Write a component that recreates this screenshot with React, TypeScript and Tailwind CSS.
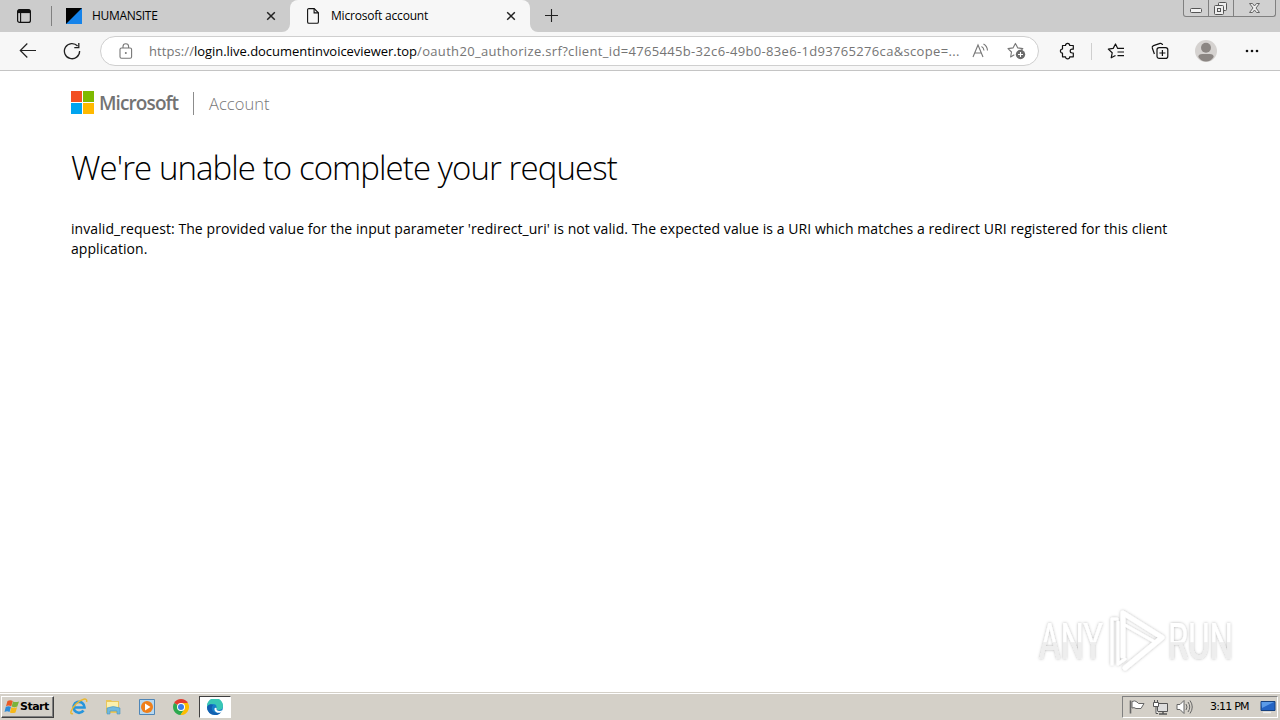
import React from "react";

const ui = "font-['Open_Sans','Noto_Sans',sans-serif]";

function CloseIcon() {
  return (
    <svg width="10" height="10" viewBox="0 0 10 10" className="ml-px shrink-0" stroke="#222" strokeWidth="1.5">
      <path d="M1.2 1.2l7.6 7.6M8.8 1.2l-7.6 7.6" />
    </svg>
  );
}

function TabStrip() {
  return (
    <div className="flex h-8 shrink-0 items-start bg-[#cccccc]">
      <div className="flex h-8 w-[290px] shrink-0 items-center pl-[17px]">
        <svg width="14" height="14" viewBox="0 0 14 14" className="shrink-0" fill="none" stroke="#111">
          <rect x="0.6" y="0.6" width="12.8" height="12.8" rx="2" strokeWidth="1.2" />
          <path d="M1 2.4h12" strokeWidth="3.4" />
          <path d="M3.6 3v10" strokeWidth="1.1" />
        </svg>
        <div className="ml-5 h-5 w-px bg-[#808080]" />
        <svg width="16" height="16" viewBox="0 0 16 16" className="ml-[14px] shrink-0">
          <path d="M0 0h16v16H0z" fill="#1583ea" />
          <path d="M0 0h16L0 16z" fill="#000" />
        </svg>
        <span className="ml-[10px] w-[173px] text-[12px] leading-4 tracking-[-0.3px] whitespace-nowrap text-black">HUMANSITE</span>
        <CloseIcon />
      </div>
      <div className="relative flex h-8 w-[240px] shrink-0 items-center rounded-t-lg bg-[#f7f7f7] pl-[17px]">
        <svg width="8" height="8" viewBox="0 0 8 8" className="absolute bottom-0 -left-2">
          <path d="M8 0v8H0a8 8 0 0 0 8-8z" fill="#f7f7f7" />
        </svg>
        <svg width="8" height="8" viewBox="0 0 8 8" className="absolute -right-2 bottom-0">
          <path d="M0 0v8h8a8 8 0 0 1-8-8z" fill="#f7f7f7" />
        </svg>
        <svg width="12" height="16" viewBox="0 0 12 16" className="shrink-0" fill="none" stroke="#111" strokeWidth="1.1">
          <path d="M2 .6h5.2l4.2 4.2V14a1.3 1.3 0 0 1-1.3 1.3H1.9A1.3 1.3 0 0 1 .6 14V1.9A1.3 1.3 0 0 1 2 .6z" />
          <path d="M7.1.8v4.1h4.2" />
        </svg>
        <span className="ml-3 w-[174px] text-[12px] leading-4 tracking-[-0.2px] whitespace-nowrap text-black">Microsoft account</span>
        <CloseIcon />
      </div>
      <svg width="14" height="14" viewBox="0 0 14 14" className="mt-[9px] ml-[15px] shrink-0" stroke="#222" strokeWidth="1.1">
        <path d="M6.5 0v13M0 6.5h13" />
      </svg>
      <div className="mr-1 ml-auto flex h-[17px] w-[93px] rounded-b-[3px] border border-t-0 border-[#808080] bg-[#d0d0d0]">
        <div className="flex w-[25px] justify-center border-r border-[#808080]">
          <svg width="24" height="16" viewBox="0 0 24 16" fill="#f2f2f2" stroke="#555">
            <rect x="6.5" y="8.5" width="11" height="4" rx="1" />
          </svg>
        </div>
        <div className="flex w-[25px] justify-center border-r border-[#808080]">
          <svg width="24" height="16" viewBox="0 0 24 16" fill="#eeeeee" stroke="#555">
            <rect x="9.5" y="2.5" width="8" height="8" rx="1" />
            <rect x="5.5" y="5.5" width="9" height="9" rx="1" />
            <rect x="8.5" y="8.5" width="3" height="3" />
          </svg>
        </div>
        <div className="flex flex-1 justify-center">
          <svg width="40" height="16" viewBox="0 0 40 16">
            <path d="M14.5 3.500h3l2 2.500 2-2.500h3L21 8l3.500 4.500h-3l-2-2.500-2 2.500h-3L18 8z" fill="#eee" stroke="#666" />
          </svg>
        </div>
      </div>
    </div>
  );
}

function Toolbar() {
  return (
    <div className="flex h-[39px] shrink-0 items-center border-b border-[#c4c4c4] bg-[#f7f7f7]">
      <svg width="18" height="16" viewBox="0 0 18 16" className="ml-[19px] shrink-0" fill="none" stroke="#222" strokeWidth="1.2">
        <path d="M17 7.500H1.500M8.300.500L1.300 7.500l7 7" />
      </svg>
      <svg width="18" height="18" viewBox="0 0 18 18" className="ml-[26px] shrink-0" fill="none" stroke="#222" strokeWidth="1.3">
        <path d="M14.6 4A7.6 7.6 0 1 0 16.6 9" />
        <path d="M15.8 1v4.6h-4.5" />
      </svg>
      <div className="ml-[19px] flex h-[30px] w-[939px] shrink-0 items-center rounded-full border border-[#cfcfcf] bg-white">
        <svg width="14" height="16" viewBox="0 0 14 16" className="ml-[18px] shrink-0" fill="none" stroke="#777" strokeWidth="1.1">
          <rect x="1" y="5" width="11.6" height="10.2" rx="1.5" />
          <path d="M4 5V3.500a2.800 2.800 0 0 1 5.600 0V5" />
          <circle cx="6.8" cy="10" r="1" fill="#777" stroke="none" />
        </svg>
        <div className="ml-4 flex w-[823px] text-[13px] leading-5 whitespace-pre text-[#757575]">
          <span className="tracking-[0.08px]">https://</span>
          <span className="tracking-[-0.04px] text-black">login.live.documentinvoiceviewer.top</span>
          <span className="tracking-[0.33px]">/oauth20_authorize.srf?client_id=4765445b-32c6-49b0-83e6-1d93765276ca&amp;scope=...</span>
        </div>
        <svg width="17" height="16" viewBox="0 0 17 16" className="shrink-0" fill="none" stroke="#777" strokeWidth="1.1">
          <path d="M1 14L6 2l5 12M2.700 10h6.600" />
          <path d="M9.500 3.500q2.200 1 2.500 4M11.500 1q3.700 2 4 6.500" />
        </svg>
        <svg width="19" height="18" viewBox="0 0 19 18" className="ml-[18px] shrink-0">
          <path d="M7.300 12.800L3.600 15l.9-5L1 6.600l5-.7 2.400-4.500 2.400 4.500 5 .7-2 2" fill="none" stroke="#777" strokeWidth="1.100" strokeLinejoin="round" />
          <circle cx="13.500" cy="12.500" r="4.700" fill="#6b6b6b" />
          <path d="M13.500 10v5M11 12.500h5" stroke="#fff" strokeWidth="1.100" />
        </svg>
      </div>
      <svg width="16" height="18" viewBox="0 0 16 18" className="ml-5 shrink-0" fill="none" stroke="#111" strokeWidth="1.2" strokeLinejoin="round">
        <path d="M3.500 3.500H6.500a2.100 2.100 0 0 1 4.200 0h3.600v3.700h-1.200a1.900 1.900 0 0 0 0 3.800h1.200v3.800H10.700a2.100 2.100 0 0 1-4.200 0H3.500v-3.600a2.100 2.100 0 0 1 0-4.200z" />
      </svg>
      <div className="ml-4 h-[17px] w-px bg-[#cfcfcf]" />
      <svg width="18" height="16" viewBox="0 0 18 16" className="ml-[15px] shrink-0" fill="none" stroke="#111" strokeWidth="1.2" strokeLinejoin="round">
        <path d="M8.500 12.500l-4.300 2.300 1-5L1.300 6.100l4.900-.7L8.500 1l2.200 4.400h6.300M10.500 9h6.500M10.500 12.700h6.500" />
      </svg>
      <svg width="18" height="18" viewBox="0 0 18 18" className="ml-[26px] shrink-0" fill="none" stroke="#111" strokeWidth="1.2">
        <rect x="6" y="5.6" width="10.8" height="10.8" rx="2.2" />
        <path d="M11.400 8v6M8.400 11h6M3.400 12L1.300 6a2 2 0 0 1 1.200-2.400l6.600-2.200A2 2 0 0 1 11.600 3" />
      </svg>
      <svg width="22" height="22" viewBox="0 0 22 22" className="ml-[26px] shrink-0">
        <circle cx="11" cy="11" r="11" fill="#d5d2d0" />
        <circle cx="11" cy="7.8" r="5" fill="#8b8683" />
        <path d="M3.300 17q0-3 4-3h7.400q4 0 4 3-3 4.600-7.700 4.600T3.300 17z" fill="#8b8683" />
      </svg>
      <svg width="14" height="4" viewBox="0 0 14 4" className="ml-7 shrink-0" fill="#111">
        <circle cx="2" cy="2" r="1.3" />
        <circle cx="7" cy="2" r="1.3" />
        <circle cx="12" cy="2" r="1.3" />
      </svg>
    </div>
  );
}

function Watermark() {
  return (
    <svg width="216" height="74" viewBox="0 0 216 74" className="absolute right-9 bottom-3 overflow-visible">
      <defs>
        <filter id="halo" x="-10%" y="-20%" width="120%" height="140%">
          <feDropShadow dx="0" dy="0" stdDeviation="1.8" floodColor="#000" floodOpacity="0.3" />
        </filter>
        <linearGradient id="shade" x1="0" y1="0" x2="0" y2="1">
          <stop offset="0.5" stopColor="#fff" />
          <stop offset="0.51" stopColor="#eeeeee" />
        </linearGradient>
      </defs>
      <g filter="url(#halo)">
        <text x="11" y="53" textLength="64" lengthAdjust="spacingAndGlyphs" fill="url(#shade)" className="font-['Roboto',sans-serif] text-[50px]">ANY</text>
        <text x="140" y="53" textLength="65" lengthAdjust="spacingAndGlyphs" fill="url(#shade)" className="font-['Roboto',sans-serif] text-[50px]">RUN</text>
        <g fill="none" stroke="#fff" strokeWidth="5" strokeLinejoin="round" strokeLinecap="round">
          <path d="M95 50V7l39 24.500L97 62" />
          <path d="M84 58V13h5M90 16v42l7-5M97 19l30 17" strokeWidth="3" />
        </g>
      </g>
    </svg>
  );
}

function Page() {
  return (
    <div className="relative flex h-[621px] shrink-0 flex-col bg-white px-[71px]">
      <div className="mt-5 flex h-6 items-start">
        <svg width="23" height="23" viewBox="0 0 23 23" className="shrink-0">
          <path d="M0 0h11v11H0z" fill="#f25022" />
          <path d="M12 0h11v11H12z" fill="#7fba00" />
          <path d="M0 12h11v11H0z" fill="#00a4ef" />
          <path d="M12 12h11v11H12z" fill="#ffb900" />
        </svg>
        <span className="ml-[5px] w-[94px] text-[19px] leading-6 font-semibold tracking-[-0.9px] text-[#737373]">Microsoft</span>
        <div className="mt-px h-[23px] w-px bg-[#8c8c8c]" />
        <span className="ml-[15px] pt-px text-[16.500px] leading-6 font-light tracking-[0.05px] text-[#777]">Account</span>
      </div>
      <h1 className="mt-7 text-[33px] leading-[50px] font-light tracking-[-0.92px] whitespace-nowrap text-black">We&apos;re unable to complete your request</h1>
      <p className="mt-[26px] text-[14px] leading-5 tracking-[0.07px] whitespace-nowrap text-black">
        invalid_request: The provided value for the input parameter &apos;redirect_uri&apos; is not valid. The expected value is a URI which matches a redirect URI registered for this client
        <br />
        application.
      </p>
      <Watermark />
    </div>
  );
}

function Taskbar() {
  return (
    <div className="flex h-7 shrink-0 items-center border-t border-[#d4d0c8] bg-[#d4d0c8] pt-px font-['DejaVu_Sans',sans-serif] shadow-[inset_0_1px_0_#fff]">
      <div className="ml-px flex h-[22px] w-[53px] shrink-0 items-center border border-t-white border-r-[#404040] border-b-[#404040] border-l-white shadow-[inset_-1px_-1px_0_#808080]">
        <svg width="16" height="16" viewBox="0 0 16 16" className="ml-[2px] shrink-0">
          <path d="M3.500 2q3-1.500 5.300 0L7.300 7.300Q4.300 6 2 7.200z" fill="#e95a24" />
          <path d="M9 2.400q2.500 1.400 6 0l-1.700 5.200q-3 1.400-5.600 0z" fill="#7bb33b" />
          <path d="M1.800 7.800q2.800-1.300 5.200 0L5.500 13q-2.300-1.400-5 0z" fill="#2d8bd8" />
          <path d="M7.400 8.200q2.800 1.300 5.700 0l-1.600 5.200q-2.700 1.300-5.600 0z" fill="#f6b81a" />
        </svg>
        <span className="text-[11px] leading-4 font-bold tracking-[-0.5px] text-black">Start</span>
      </div>
      <svg width="18" height="18" viewBox="0 0 18 18" className="ml-4 shrink-0" fill="none">
        <path d="M13.500 12.500A5.500 5.500 0 1 1 14.500 9.500H5" stroke="#2695dc" strokeWidth="2.700" />
        <path d="M3 15.500C-1 17 1 11 6 6S18-1 16.500 4" stroke="#e9b832" strokeWidth="1.500" />
      </svg>
      <svg width="18" height="18" viewBox="0 0 18 18" className="ml-4 shrink-0">
        <path d="M2 2h5l1 1h7v12H2z" fill="#eac65a" />
        <path d="M3 4h11v6H3z" fill="#fbf0ae" />
        <path d="M3 10q6-3 13 0v6h-3v-3H6v3H3z" fill="#70b9df" stroke="#4a94bd" strokeWidth=".6" />
      </svg>
      <svg width="16" height="16" viewBox="0 0 16 16" className="ml-[17px] shrink-0">
        <path d="M.5.500h15v15H.500z" fill="#b7d8f0" stroke="#4f86b7" />
        <circle cx="8" cy="8" r="6" fill="#ef7f1a" />
        <path d="M6 4.500L11.500 8 6 11.500z" fill="#fff" />
      </svg>
      <svg width="16" height="16" viewBox="0 0 16 16" className="ml-[18px] shrink-0">
        <path d="M8 8L1.100 4a8 8 0 0 1 13.800 0z" fill="#e33b2e" />
        <path d="M8 8L1.100 4a8 8 0 0 0 6.400 12L11.500 10z" fill="#2da94f" />
        <path d="M8 8l3.500 2-4 6A8 8 0 0 0 14.900 4H8z" fill="#fdbd00" />
        <circle cx="8" cy="8" r="4" fill="#fff" />
        <circle cx="8" cy="8" r="3" fill="#3a7de8" />
      </svg>
      <div className="ml-[10px] flex h-[22px] w-8 items-center justify-center border border-t-[#404040] border-r-white border-b-white border-l-[#404040] bg-white">
        <svg width="16" height="16" viewBox="0 0 16 16">
          <circle cx="8" cy="8" r="8" fill="#167fc9" />
          <path d="M0 7A8 8 0 0 1 16 7q0 4-4.500 4Q9 11 9.500 9 10 5 6 5 2 5 0 8z" fill="#38c7b5" />
          <path d="M6 6q-3 4 1 7 3 2 7 .2Q12 16 8 16q-8-1-8-8 2-4 6-2z" fill="#1260b0" />
          <path d="M9.500 9q-.5 3 3 3 2 0 3-1l-1 2.300Q9 15 7.500 11 7 8 9.500 9z" fill="#fff" />
        </svg>
      </div>
      <div className="mr-[2px] ml-auto flex h-[22px] w-[156px] items-center border border-t-[#808080] border-r-white border-b-white border-l-[#808080]">
        <svg width="17" height="16" viewBox="0 0 17 16" className="ml-[5px] shrink-0" fill="#fff" stroke="#666">
          <path d="M4 2.500q3-1.500 5 .5l1.500 1.500H16L13 9.500H8Q6 8 4 9z" />
          <path d="M2.500 1.500v13" strokeWidth="1.600" />
        </svg>
        <svg width="17" height="17" viewBox="0 0 17 17" className="ml-[7px] shrink-0" fill="#fff" stroke="#555">
          <path d="M5.500 4.500h10v8h-10z" fill="#ddd" />
          <path d="M1.500 3.500h5v4h-5zM2.500 1v2M5.500 1v2M4 8v6.500h2" />
          <path d="M7 15h8M11 13v2" strokeWidth="1.500" />
        </svg>
        <svg width="17" height="16" viewBox="0 0 17 16" className="ml-[7px] shrink-0" fill="#fff" stroke="#666">
          <path d="M1 5.500h3L8 1.500v13L4 10.500H1z" />
          <path d="M10 5q2 3 0 6M12 3q3.500 5 0 10M14 1.500q4.500 6.500 0 13" fill="none" />
        </svg>
        <span className="ml-[17px] w-[50px] text-[11px] leading-4 tracking-[-0.8px] whitespace-nowrap text-black">3:11 PM</span>
        <svg width="16" height="14" viewBox="0 0 16 14" className="shrink-0">
          <path d="M1 1.500h14v9H1z" fill="#2464c4" stroke="#16417f" />
          <path d="M1.500 2H14L2 8z" fill="#5b9be8" />
          <path d="M3 12.500h8" stroke="#eee" strokeWidth="1.500" />
        </svg>
      </div>
    </div>
  );
}

export default function App() {
  return (
    <div className={`flex h-[720px] w-[1280px] flex-col overflow-hidden bg-white ${ui}`}>
      <TabStrip />
      <Toolbar />
      <Page />
      <Taskbar />
    </div>
  );
}
